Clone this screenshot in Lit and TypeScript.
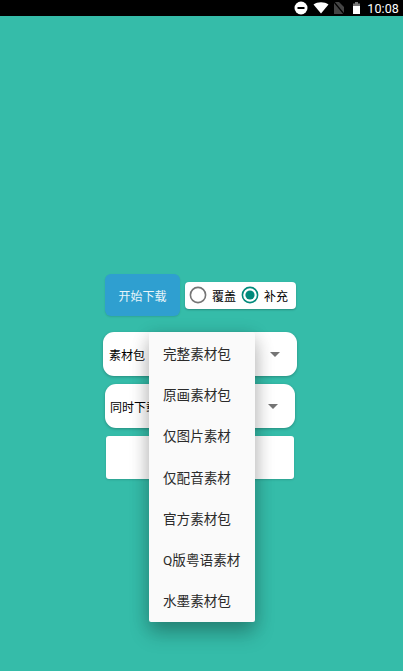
import { LitElement, html, css } from "lit";
import { customElement } from "lit/decorators.js";

const items = ["完整素材包", "原画素材包", "仅图片素材", "仅配音素材", "官方素材包", "Q版粤语素材", "水墨素材包"];

@customElement("app-root")
export class AppRoot extends LitElement {
  static styles = css`
    :host { display: block; width: 403px; height: 671px; overflow: hidden; position: relative; background: #35bca9;
      font-family: Roboto, "Noto Sans CJK SC", sans-serif; }
    .status { height: 16px; background: #000; display: flex; align-items: center; justify-content: flex-end; color: #fff; padding-right: 4px; font-size: 12.5px; }
    .status svg { display: block; }
    .wifi { margin-left: 5px; }
    .sim { margin-left: 4px; }
    .batt { margin-left: 7px; }
    .time { margin-left: 6px; letter-spacing: 0.1px; }
    .content { display: flex; flex-direction: column; align-items: center; padding-top: 258px; padding-right: 3px; }
    .top { display: flex; align-items: center; gap: 5px; width: 191px; margin-left: 1px; }
    .start { width: 75px; height: 42px; border-radius: 6px; background: #2f9fd0; color: #e8f5fa; font-size: 12px; display: flex; align-items: center; justify-content: center; box-shadow: 0 1px 2px rgba(0,0,0,.12); }
    .radios { width: 111px; height: 27px; background: #fff; border-radius: 4px; display: flex; align-items: center; padding-left: 4px; box-sizing: border-box; font-size: 12px; color: #000; box-shadow: 0 1px 2px rgba(0,0,0,.25); }
    .radio { width: 18px; height: 18px; display: block; margin-right: 5px; flex: none; }
    .label { margin-right: 5px; }
    .select { background: #fff; display: flex; align-items: center; justify-content: space-between; box-sizing: border-box; font-size: 12px; color: #000; border-radius: 11px; box-shadow: 0 1px 3px rgba(0,0,0,.25); }
    .s1 { width: 194px; height: 44px; margin-top: 16px; padding: 0 17px 0 6px; }
    .s2 { width: 190px; height: 44px; margin-top: 8px; padding: 0 17px 0 5px; }
    .arrow { width: 0; height: 0; border-left: 5px solid transparent; border-right: 5px solid transparent; border-top: 5px solid #757575; }
    .input { width: 188px; height: 43px; margin-top: 8px; background: #fff; border-radius: 3px; box-shadow: 0 1px 2px rgba(0,0,0,.15); }
    .menu { position: absolute; left: 149px; top: 332px; width: 106px; height: 290px; background: #fafafa; border-radius: 2px; box-shadow: 0 12px 20px rgba(0,0,0,.22), 0 3px 18px rgba(0,0,0,.16); }
    .item { height: 41.3px; display: flex; align-items: center; padding-left: 14px; font-size: 13.6px; color: #2b2b2b; white-space: nowrap; }
  `;
  render() {
    return html`
      <div class="status">
        <svg width="14" height="14" viewBox="0 0 14 14"><circle cx="7" cy="7" r="6.5" fill="#fff"/><rect x="3.5" y="6" width="7" height="2" fill="#000"/></svg>
        <svg class="wifi" width="16" height="14" viewBox="0 0 16 14"><path d="M0.5 3.5C4.5 0.5 11.5 0.5 15.5 3.5L8 12.5Z" fill="#fff"/></svg>
        <svg class="sim" width="12" height="14" viewBox="0 0 12 14"><path d="M1 1h5l5 5v7H1Z" fill="#444"/><path d="M1 1l10 12" stroke="#000" stroke-width="1.2"/></svg>
        <svg class="batt" width="9" height="14" viewBox="0 0 9 14"><path d="M3 1h3v1.5h2V13H1V2.5h2Z" fill="#777"/><rect x="1" y="5" width="7" height="8" fill="#fff"/></svg>
        <span class="time">10:08</span>
      </div>
      <div class="content">
        <div class="top">
          <div class="start">开始下载</div>
          <div class="radios">
            <svg class="radio" viewBox="0 0 18 18"><circle cx="9" cy="9" r="7.6" fill="none" stroke="#757575" stroke-width="1.6"/></svg>
            <span class="label">覆盖</span>
            <svg class="radio" viewBox="0 0 18 18"><circle cx="9" cy="9" r="7.6" fill="none" stroke="#00897b" stroke-width="1.6"/><circle cx="9" cy="9" r="4.6" fill="#00897b"/></svg>
            <span class="label">补充</span>
          </div>
        </div>
        <div class="select s1"><span>素材包</span><span class="arrow"></span></div>
        <div class="select s2"><span>同时下载数</span><span class="arrow"></span></div>
        <div class="input"></div>
      </div>
      <div class="menu">
        ${items.map((t) => html`<div class="item">${t}</div>`)}
      </div>
    `;
  }
}
